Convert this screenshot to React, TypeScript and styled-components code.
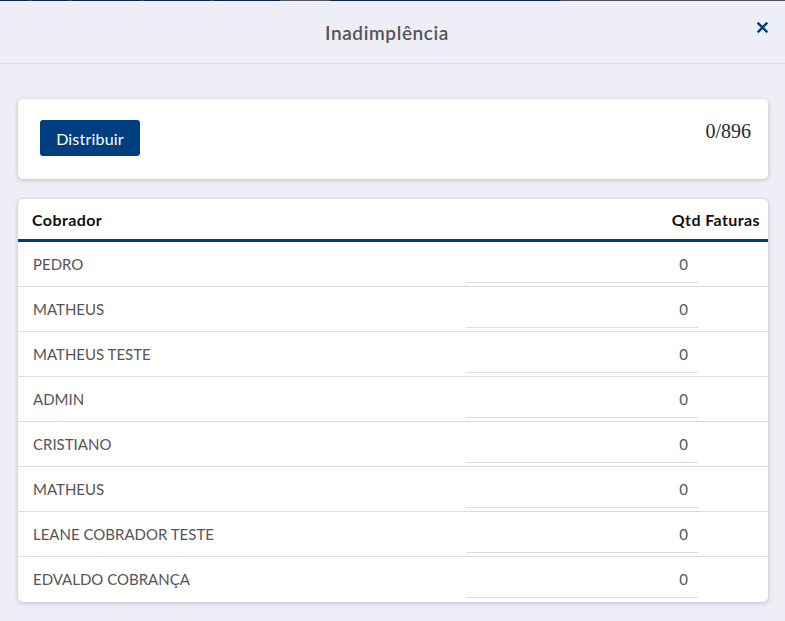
import React from "react";
import styled, { createGlobalStyle } from "styled-components";

const colors = {
  page: "#eeeef7",
  navy: "#003f7f",
  text: "#555555",
  line: "#dcdcdc",
};

const GlobalStyle = createGlobalStyle`
  html, body {
    margin: 0;
    padding: 0;
    background: ${colors.page};
  }
  body {
    font-family: Lato, "Liberation Sans", sans-serif;
  }
`;

const Screen = styled.div`
  width: 785px;
  height: 621px;
  background: ${colors.page};
  display: flex;
  flex-direction: column;
  overflow: hidden;
`;

// 1px strip of the page underneath the modal
const BackdropEdge = styled.div`
  height: 1px;
  flex: 0 0 1px;
  background: linear-gradient(
    to right,
    #0b2545 0 28px,
    #3b3b44 28px 32px,
    #0b2545 32px 68px,
    #3b3b44 68px 72px,
    #0b2545 72px 140px,
    #3b3b44 140px 144px,
    #0b2545 144px 210px,
    #3b3b44 210px 215px,
    #0b2545 215px 280px,
    #55555c 280px 330px,
    #0b2545 330px 560px,
    #505056 560px
  );
`;

const Header = styled.div`
  height: 63px;
  flex: 0 0 63px;
  box-sizing: border-box;
  display: flex;
  align-items: center;
  justify-content: center;
  position: relative;
  padding: 0 11px 0 0;
  border-bottom: 1px solid ${colors.line};
`;

const Title = styled.h2`
  margin: 0;
  font-size: 19px;
  font-weight: 600;
  color: ${colors.text};
  letter-spacing: 0.6px;
`;

const CloseButton = styled.button`
  position: absolute;
  right: 14px;
  top: 17px;
  width: 18px;
  height: 18px;
  padding: 0;
  border: 0;
  background: none;
  display: flex;
  align-items: center;
  justify-content: center;
  cursor: pointer;
`;

const Body = styled.div`
  display: flex;
  flex-direction: column;
  gap: 20px;
  padding: 35px 17px 0 18px;
`;

const Card = styled.div`
  background: #fff;
  border-radius: 5px;
  box-shadow: 0 1px 4px rgba(0, 0, 0, 0.22);
`;

const Toolbar = styled(Card)`
  height: 80px;
  display: flex;
  justify-content: space-between;
  align-items: flex-start;
  padding: 21px 17px 0 22px;
  box-sizing: border-box;
`;

const PrimaryButton = styled.button`
  height: 36px;
  width: 100px;
  border: 0;
  border-radius: 3px;
  background: ${colors.navy};
  color: #fff;
  font-family: inherit;
  font-size: 16px;
  letter-spacing: 0.2px;
  cursor: pointer;
`;

const Counter = styled.span`
  font-family: "Liberation Serif", serif;
  font-size: 20px;
  line-height: 22px;
  color: #2a2a2a;
`;

const Table = styled.table`
  width: 100%;
  border-collapse: collapse;
`;

const HeadCell = styled.th<{ $align?: "left" | "right" }>`
  height: 40px;
  padding: 0 8px 0 14px;
  text-align: ${(p) => p.$align ?? "left"};
  font-size: 16px;
  font-weight: 700;
  letter-spacing: 0.4px;
  color: #111;
  border-bottom: 3px solid ${colors.navy};
`;

const Row = styled.tr`
  td {
    border-bottom: 1px solid ${colors.line};
  }
  &:last-child td {
    border-bottom-color: transparent;
  }
`;

const NameCell = styled.td`
  height: 44px;
  padding: 0 0 0 15px;
  font-size: 15px;
  color: ${colors.text};
`;

const QtyCell = styled.td`
  width: 302px;
  padding: 0;
  vertical-align: top;
`;

const QtyInput = styled.input`
  display: block;
  box-sizing: border-box;
  width: 232px;
  height: 38px;
  margin: 3px 0 0 0;
  padding: 0 10px 0 0;
  border: 0;
  border-bottom: 1px solid ${colors.line};
  background: transparent;
  text-align: right;
  font-family: inherit;
  font-size: 15px;
  color: ${colors.text};
  outline: none;
`;

const collectors = [
  "PEDRO",
  "MATHEUS",
  "MATHEUS TESTE",
  "ADMIN",
  "CRISTIANO",
  "MATHEUS",
  "LEANE COBRADOR TESTE",
  "EDVALDO COBRANÇA",
];

const CloseIcon = () => (
  <svg width="11" height="11" viewBox="0 0 11 11">
    <path d="M1.5 1.5 L9.5 9.5 M9.5 1.5 L1.5 9.5" stroke={colors.navy} strokeWidth="2.4" strokeLinecap="square" />
  </svg>
);

export default function App() {
  return (
    <Screen>
      <GlobalStyle />
      <BackdropEdge />
      <Header>
        <Title>Inadimplência</Title>
        <CloseButton aria-label="Fechar">
          <CloseIcon />
        </CloseButton>
      </Header>
      <Body>
        <Toolbar>
          <PrimaryButton>Distribuir</PrimaryButton>
          <Counter>0/896</Counter>
        </Toolbar>
        <Card>
          <Table>
            <thead>
              <tr>
                <HeadCell>Cobrador</HeadCell>
                <HeadCell $align="right">Qtd Faturas</HeadCell>
              </tr>
            </thead>
            <tbody>
              {collectors.map((name, i) => (
                <Row key={i}>
                  <NameCell>{name}</NameCell>
                  <QtyCell>
                    <QtyInput defaultValue="0" />
                  </QtyCell>
                </Row>
              ))}
            </tbody>
          </Table>
        </Card>
      </Body>
    </Screen>
  );
}
